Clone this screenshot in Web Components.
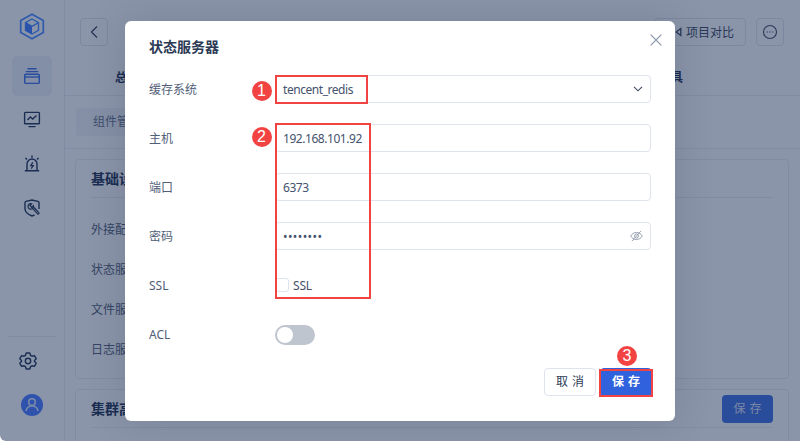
<!DOCTYPE html>
<html lang="zh">
<head>
<meta charset="utf-8">
<title>状态服务器</title>
<style>
  html, body { margin: 0; height: 100%; background: #fff; }
  body { font: 12px "Noto Sans", "Noto Sans CJK SC", sans-serif; color: #2c3a55; overflow: hidden; }
  #stage { position: relative; width: 800px; height: 441px; overflow: hidden; display: flex; border-bottom-left-radius: 6px; }
</style>
</head>
<body>
<div id="stage">
  <side-nav></side-nav>
  <main-panel></main-panel>
  <modal-layer>
    <form-row label="缓存系统"><text-field value="tencent_redis" icon="chevron"></text-field></form-row>
    <form-row label="主机"><text-field value="192.168.101.92"></text-field></form-row>
    <form-row label="端口"><text-field value="6373"></text-field></form-row>
    <form-row label="密码"><text-field value="••••••••" icon="eye" spacing=".4px"></text-field></form-row>
    <form-row label="SSL"><check-box>SSL</check-box></form-row>
    <form-row label="ACL"><toggle-switch></toggle-switch></form-row>
  </modal-layer>
  <mark-box x="275" y="75" w="93" h="29"></mark-box>
  <mark-box x="275" y="123" w="96" h="176"></mark-box>
  <mark-box x="599" y="369" w="54" h="28"></mark-box>
  <mark-badge x="261.5" y="90.5">1</mark-badge>
  <mark-badge x="261.5" y="137">2</mark-badge>
  <mark-badge x="627" y="356">3</mark-badge>
</div>

<script>
// 左侧导航
class SideNav extends HTMLElement {
  connectedCallback() {
    this.attachShadow({ mode: "open" }).innerHTML = `
      <style>
        :host { display: flex; flex-direction: column; align-items: center; flex: none; width: 65px; box-sizing: border-box;
                height: 441px; border-right: 1px solid #dde2ec; background: #f3f5f9; color: #10244a; padding-top: 13px; }
        .logo { width: 26px; height: 27px; margin-bottom: 16px; }
        .item { width: 40px; height: 40px; border-radius: 5px; display: flex; align-items: center; justify-content: center; margin-bottom: 4px; }
        .item svg { width: 20px; height: 20px; fill: none; stroke: currentColor; stroke-width: 1.4; }
        .active { background: #e3e9f5; color: #2a62e0; }
        .spacer { flex: 1; }
        .line { width: 48px; height: 1px; background: #dde2ec; margin-bottom: 14px; }
        .gear { width: 20px; height: 20px; margin: 0 8px 23px 0; fill: none; stroke: currentColor; stroke-width: 1.4; }
        .user { width: 22px; height: 22px; margin-bottom: 25px; }
      </style>
      <svg class="logo" viewBox="0 0 26 27">
        <path d="M13 1.200 24.300 7.400V19.600L13 25.800 1.700 19.600V7.400Z" fill="none" stroke="#3a7eff" stroke-width="1.700"/>
        <path d="M13 6 19.500 9.600V17.400L13 21 6.500 17.400V9.600Z" fill="none" stroke="#3a7eff" stroke-width="1.400"/>
        <path d="M6.500 9.600 13 13.400" fill="none" stroke="#3a7eff" stroke-width="1.400"/>
        <path d="M13 13.400 19.500 9.600" fill="none" stroke="#3a7eff" stroke-width="1.400"/>
        <path d="M6.500 9.600 13 13.400V21L6.500 17.400Z" fill="#2f6fff"/>
      </svg>
      <div class="item active"><svg viewBox="0 0 20 20"><path d="M5.500 2.800h9M3.800 5.600h12.400"/><rect x="2.700" y="8.200" width="14.600" height="9.200" rx="1"/><path d="M2.700 11h14.600"/></svg></div>
      <div class="item"><svg viewBox="0 0 20 20"><rect x="2.600" y="2.400" width="14.800" height="11.400" rx=".8"/><path d="M5.500 9.900 8.300 7l2.400 2 3.800-3.400M6.500 16.600h7"/></svg></div>
      <div class="item"><svg viewBox="0 0 20 20"><path d="M5 16.500V10a5 5 0 0 1 10 0v6.500M2.800 16.800h14.400M10 1.500v2.200M3.500 4l1.500 1.600M16.500 4 15 5.600"/><path d="M10.800 8.400 8.800 11.600h2.400l-2 3" stroke-width="1.200"/></svg></div>
      <div class="item"><svg viewBox="0 0 20 20"><path d="M12.500 17 10 18C6 16.500 3 14 3 10.500V4.800C3 4 3.300 3.600 4 3.400L10 2l6 1.400c.7.200 1 .6 1 1.400v6.200"/><path d="M9.700 5.800 7.900 7.600 9.700 9.400 11.400 7.700C11.900 9.800 10.300 11.400 8.400 11.200 6.400 10.900 5.500 8.800 6.300 7 7 5.700 8.300 5.300 9.700 5.800Z" stroke-width="1.200"/><path d="M10.800 10.600 15.600 15.800c.8.800 1.900-.2 1.200-1.100L12.100 9.500" stroke-width="1.200"/></svg></div>
      <div class="spacer"></div>
      <div class="line"></div>
      <svg class="gear" viewBox="0 0 20 20"><path d="M8.200 2h3.600l.7 2.300 1.500.9 2.400-.6 1.800 3.100-1.700 1.700v1.200l1.700 1.700-1.800 3.100-2.400-.6-1.500.9-.7 2.300H8.200l-.7-2.300-1.500-.9-2.400.6-1.800-3.100 1.700-1.700V9.400L1.800 7.700l1.800-3.100 2.400.6 1.500-.9Z" stroke-linejoin="round"/><circle cx="10" cy="10" r="2.700"/></svg>
      <svg class="user" viewBox="0 0 22 22"><circle cx="11" cy="11" r="11" fill="#3a70ff"/><circle cx="11" cy="8" r="3.300" fill="none" stroke="#d5e0fb" stroke-width="1.500"/><path d="M5 17c.6-3.300 3-5 6-5s5.400 1.700 6 5" fill="none" stroke="#d5e0fb" stroke-width="1.500"/></svg>
    `;
  }
}
customElements.define("side-nav", SideNav);

// 背景页（被遮罩盖住的部分）
class MainPanel extends HTMLElement {
  connectedCallback() {
    this.attachShadow({ mode: "open" }).innerHTML = `
      <style>
        :host { display: block; flex: 1; min-width: 0; background: #f3f5f9; color: #10244a; }
        .top { height: 96px; box-sizing: border-box; border-bottom: 1px solid #dde2ec; padding: 18px 16px 0 15px; }
        .bar { display: flex; gap: 10px; height: 28px; }
        .btn { box-sizing: border-box; height: 28px; border: 1px solid #d5dbe6; border-radius: 4px; display: flex; align-items: center; justify-content: center; color: #2c3a55; }
        .back { width: 28px; margin-right: auto; }
        .compare { width: 92px; gap: 4px; padding-left: 9px; }
        .more { width: 28px; }
        .tabs { display: flex; justify-content: space-between; margin: 24px 101px 0 35px; font-weight: 700; line-height: 16px; }
        .sub { height: 53px; box-sizing: border-box; border-bottom: 1px solid #dde2ec; padding: 12px 11px 0; }
        .pill { display: inline-block; height: 28px; line-height: 28px; padding: 0 17px; border-radius: 4px; background: #e6e9f0; color: #5a6780; }
        .content { padding: 10px 11px 0 10px; display: flex; flex-direction: column; gap: 10px; }
        .card { box-sizing: border-box; border: 1px solid #dde2ec; border-radius: 4px; padding: 0 15px; position: relative; }
        .first { height: 220px; }
        .second { height: 60px; }
        .title { height: 37px; line-height: 37px; font-size: 14px; font-weight: 700; border-bottom: 1px solid #dde2ec; }
        .rows { display: flex; flex-direction: column; padding-top: 12px; color: #44526d; }
        .rows div { height: 40px; line-height: 40px; }
        .save { position: absolute; right: 15px; top: 5px; width: 51px; height: 28px; border-radius: 4px; background: #2f62dc; color: #cfd9f2; text-align: center; line-height: 28px; letter-spacing: 4px; text-indent: 4px; }
      </style>
      <div class="top">
        <div class="bar">
          <div class="btn back"><svg width="12" height="14" viewBox="0 0 12 14" fill="none" stroke="#2c3a55" stroke-width="1.300"><path d="M9 1.500 3.500 7 9 12.500"/></svg></div>
          <div class="btn compare"><svg width="7" height="10" viewBox="0 0 7 10" fill="none" stroke="#2c3a55" stroke-width="1.300"><path d="M5.800 1.500 1.200 5l4.600 3.500Z"/></svg>项目对比</div>
          <div class="btn more"><svg width="16" height="16" viewBox="0 0 16 16" fill="none" stroke="#2c3a55" stroke-width="1.100"><circle cx="8" cy="8" r="6.500"/><path d="M4.800 8h.8M7.600 8h.8M10.400 8h.8" stroke-width="1.300"/></svg></div>
        </div>
        <div class="tabs"><span>总览</span><span>工具</span></div>
      </div>
      <div class="sub"><span class="pill">组件管理</span></div>
      <div class="content">
        <div class="card first">
          <div class="title">基础设置</div>
          <div class="rows"><div>外接配置</div><div>状态服务器</div><div>文件服务器</div><div>日志服务器</div></div>
        </div>
        <div class="card second">
          <div class="title">集群高可用</div>
          <div class="save">保存</div>
        </div>
      </div>
    `;
  }
}
customElements.define("main-panel", MainPanel);

// 遮罩和对话框
class ModalLayer extends HTMLElement {
  connectedCallback() {
    this.attachShadow({ mode: "open" }).innerHTML = `
      <style>
        :host { position: absolute; inset: 0; display: block; background: rgba(36, 54, 90, .5); }
        .dialog { position: absolute; left: 125px; top: 21px; width: 550px; height: 400px; box-sizing: border-box; background: #fff; border-radius: 6px;
                  box-shadow: 0 0 40px rgba(20, 30, 50, .16); padding: 0 24px; display: flex; flex-direction: column; }
        .head { height: 54px; display: flex; justify-content: space-between; font-size: 14px; font-weight: 700; line-height: 52px; color: #2c3a55; }
        .close { margin: 13px -11px 0 0; width: 12px; height: 12px; }
        .rows { display: flex; flex-direction: column; gap: 21px; }
        .foot { display: flex; justify-content: flex-end; gap: 4px; margin: 20px -1px 0 0; }
        .btn { box-sizing: border-box; width: 52px; height: 28px; border-radius: 4px; line-height: 26px; text-align: center; letter-spacing: 4px; text-indent: 4px; }
        .cancel { border: 1px solid #dfe3ee; color: #2c3a55; }
        .ok { border: 1px solid #2f62dc; background: #2f62dc; color: #fff; font-weight: 700; }
      </style>
      <div class="dialog">
        <div class="head"><span>状态服务器</span>
          <svg class="close" viewBox="0 0 12 12" fill="none" stroke="#8a94a6" stroke-width="1.200"><path d="M.7.7l10.600 10.600M11.300.7.700 11.300"/></svg>
        </div>
        <div class="rows"><slot></slot></div>
        <div class="foot"><div class="btn cancel">取消</div><div class="btn ok">保存</div></div>
      </div>
    `;
  }
}
customElements.define("modal-layer", ModalLayer);

class FormRow extends HTMLElement {
  connectedCallback() {
    this.attachShadow({ mode: "open" }).innerHTML = `
      <style>
        :host { display: flex; align-items: center; height: 28px; }
        .label { width: 126px; flex: none; color: #515e78; }
        .ctrl { flex: 1; display: flex; align-items: center; min-width: 0; }
      </style>
      <div class="label">${this.getAttribute("label")}</div>
      <div class="ctrl"><slot></slot></div>
    `;
  }
}
customElements.define("form-row", FormRow);

class TextField extends HTMLElement {
  connectedCallback() {
    const icons = {
      chevron: `<svg width="10" height="6" viewBox="0 0 10 6" fill="none" stroke="#3d4a63" stroke-width="1.100"><path d="M1 .8 5 4.800 9 .8"/></svg>`,
      eye: `<svg width="13" height="12" viewBox="0 0 13 12" fill="none" stroke="#98a1b1" stroke-width="1"><path d="M.7 6C2 3.700 4 2.500 6.500 2.500S11 3.700 12.300 6C11 8.300 9 9.500 6.500 9.500S2 8.300.7 6Z"/><circle cx="6.500" cy="6" r="2"/><path d="M11 .8 2 11.200"/></svg>`
    };
    this.attachShadow({ mode: "open" }).innerHTML = `
      <style>
        :host { display: flex; align-items: center; justify-content: space-between; flex: 1; box-sizing: border-box; height: 28px;
                border: 1px solid #dfe3ee; border-radius: 4px; padding: 0 7px; color: #44526d; }
        span { letter-spacing: ${this.getAttribute("spacing") || "-.45px"}; }
      </style>
      <span>${this.getAttribute("value")}</span>${icons[this.getAttribute("icon")] || ""}
    `;
  }
}
customElements.define("text-field", TextField);

class CheckBox extends HTMLElement {
  connectedCallback() {
    this.attachShadow({ mode: "open" }).innerHTML = `
      <style>
        :host { display: inline-flex; align-items: center; gap: 4px; color: #44526d; letter-spacing: -.2px; }
        i { box-sizing: border-box; width: 14px; height: 14px; border: 1px solid #dfe3ee; border-radius: 3px; }
      </style>
      <i></i><slot></slot>
    `;
  }
}
customElements.define("check-box", CheckBox);

class ToggleSwitch extends HTMLElement {
  connectedCallback() {
    this.attachShadow({ mode: "open" }).innerHTML = `
      <style>
        :host { display: block; box-sizing: border-box; width: 40px; height: 20px; margin-top: 2px; border-radius: 10px; background: #bfc5ce; padding: 2px; }
        i { display: block; width: 16px; height: 16px; border-radius: 50%; background: #fff; }
      </style>
      <i></i>
    `;
  }
}
customElements.define("toggle-switch", ToggleSwitch);

// 截图上的红色标注
class MarkBox extends HTMLElement {
  connectedCallback() {
    const a = n => this.getAttribute(n) + "px";
    this.attachShadow({ mode: "open" }).innerHTML = `
      <style>
        :host { position: absolute; box-sizing: border-box; left: ${a("x")}; top: ${a("y")}; width: ${a("w")}; height: ${a("h")}; border: 2px solid #f24343; }
      </style>
    `;
  }
}
customElements.define("mark-box", MarkBox);

class MarkBadge extends HTMLElement {
  connectedCallback() {
    const x = +this.getAttribute("x"), y = +this.getAttribute("y");
    this.attachShadow({ mode: "open" }).innerHTML = `
      <style>
        :host { position: absolute; left: ${x - 10}px; top: ${y - 10}px; width: 20px; height: 20px; border-radius: 50%; background: #f24343; color: #fff;
                font: 16px/20px "Liberation Sans", sans-serif; text-align: center; }
      </style>
      <slot></slot>
    `;
  }
}
customElements.define("mark-badge", MarkBadge);
</script>
</body>
</html>
